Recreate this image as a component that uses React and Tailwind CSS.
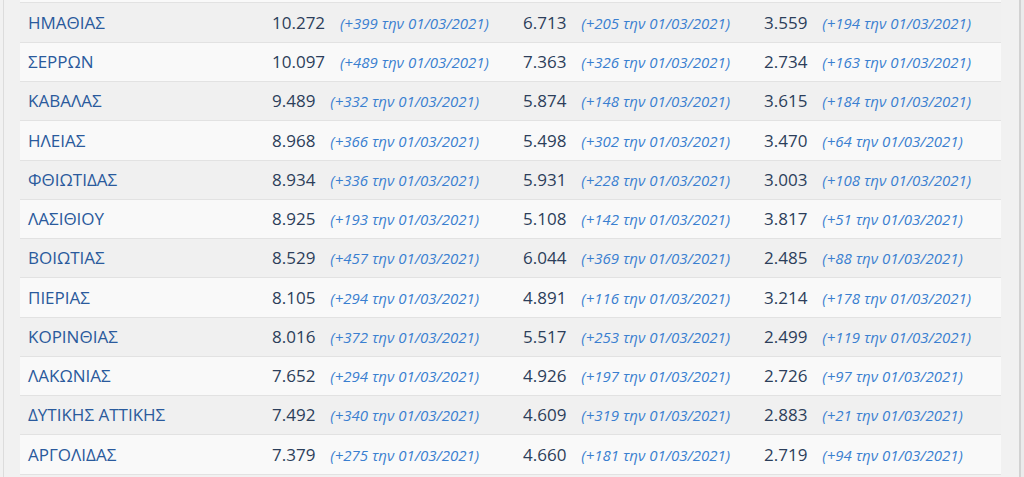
const rows = [
  ['ΗΜΑΘΙΑΣ', '10.272', '+399', '6.713', '+205', '3.559', '+194'],
  ['ΣΕΡΡΩΝ', '10.097', '+489', '7.363', '+326', '2.734', '+163'],
  ['ΚΑΒΑΛΑΣ', '9.489', '+332', '5.874', '+148', '3.615', '+184'],
  ['ΗΛΕΙΑΣ', '8.968', '+366', '5.498', '+302', '3.470', '+64'],
  ['ΦΘΙΩΤΙΔΑΣ', '8.934', '+336', '5.931', '+228', '3.003', '+108'],
  ['ΛΑΣΙΘΙΟΥ', '8.925', '+193', '5.108', '+142', '3.817', '+51'],
  ['ΒΟΙΩΤΙΑΣ', '8.529', '+457', '6.044', '+369', '2.485', '+88'],
  ['ΠΙΕΡΙΑΣ', '8.105', '+294', '4.891', '+116', '3.214', '+178'],
  ['ΚΟΡΙΝΘΙΑΣ', '8.016', '+372', '5.517', '+253', '2.499', '+119'],
  ['ΛΑΚΩΝΙΑΣ', '7.652', '+294', '4.926', '+197', '2.726', '+97'],
  ['ΔΥΤΙΚΗΣ ΑΤΤΙΚΗΣ', '7.492', '+340', '4.609', '+319', '2.883', '+21'],
  ['ΑΡΓΟΛΙΔΑΣ', '7.379', '+275', '4.660', '+181', '2.719', '+94'],
];

function Stat({ value, diff }) {
  return (
    <td className="px-2 whitespace-nowrap">
      <span className="text-[17px] text-[#2c3e5a]">{value}</span>
      <span className="ml-[15px] text-[15px] italic text-[#3a7fd0]">({diff} την 01/03/2021)</span>
    </td>
  );
}

export default function App() {
  return (
    <div className="flex h-[477px] w-[1024px] overflow-hidden bg-[#f1f1f1]" style={{ fontFamily: '"Open Sans", "Noto Sans", sans-serif' }}>
      {/* left gutter */}
      <div className="flex w-[20px] shrink-0">
        <div className="w-[3px]" />
        <div className="w-px bg-[#dcdcdc]" />
      </div>

      <div className="w-[981px] shrink-0">
        <div className="h-[3px] border-b border-[#e2e2e2] bg-[#f9f9f9]" />
        <table className="w-full table-fixed border-collapse">
          <colgroup>
            <col className="w-[244px]" />
            <col className="w-[251px]" />
            <col className="w-[241px]" />
            <col className="w-[245px]" />
          </colgroup>
          <tbody>
            {rows.map((r, i) => (
              <tr key={r[0]} className={`h-[39.25px] border-b border-[#e2e2e2] ${i % 2 === 0 ? 'bg-[#f0f0f0]' : 'bg-[#f9f9f9]'}`}>
                <td className="px-2 text-[17px] text-[#2a5a9c] whitespace-nowrap">{r[0]}</td>
                <Stat value={r[1]} diff={r[2]} />
                <Stat value={r[3]} diff={r[4]} />
                <Stat value={r[5]} diff={r[6]} />
              </tr>
            ))}
          </tbody>
        </table>
      </div>

      {/* right gutter / scrollbar edge */}
      <div className="flex flex-1">
        <div className="w-[18px]" />
        <div className="w-[2px] bg-[#d2d2d2]" />
        <div className="flex-1 bg-[#ebebeb]" />
      </div>
    </div>
  );
}
